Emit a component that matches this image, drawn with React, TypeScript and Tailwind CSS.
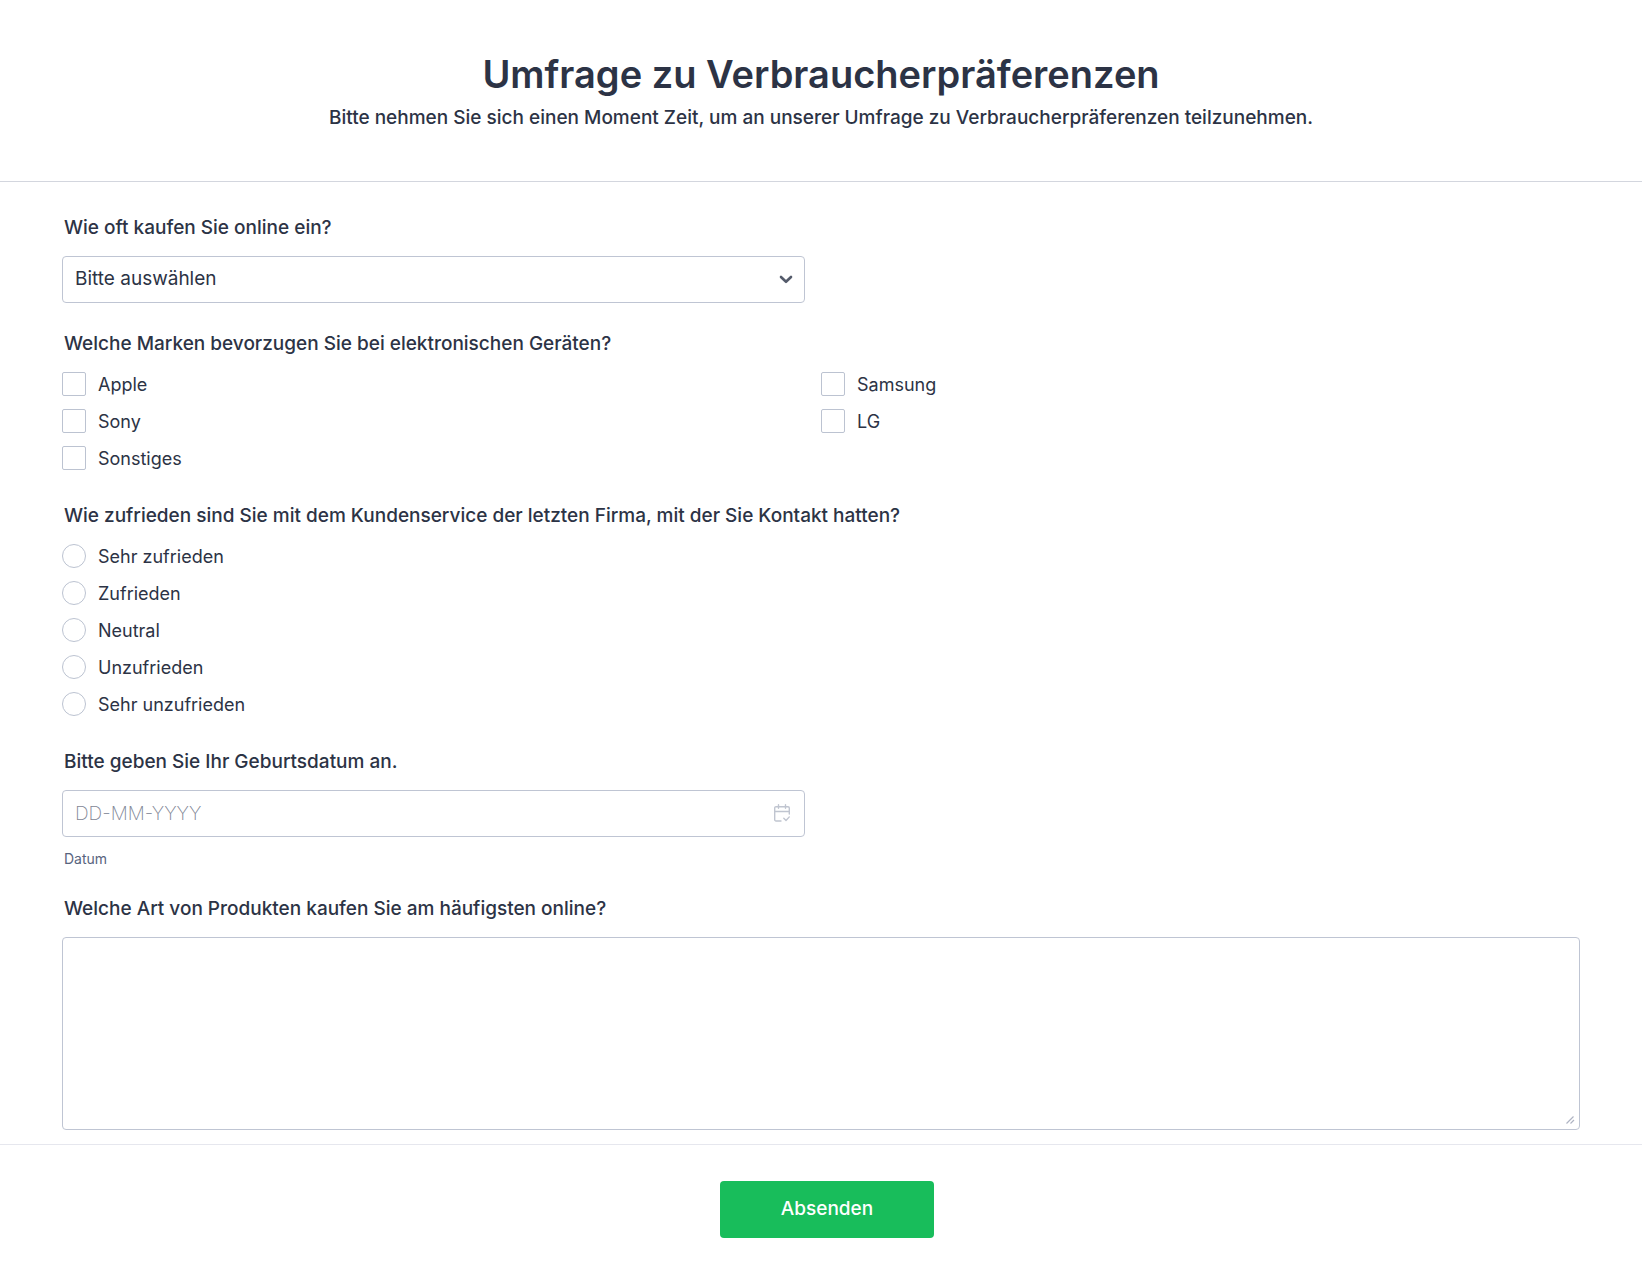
import React from "react";

const brands = ["Apple", "Samsung", "Sony", "LG", "Sonstiges"];
const ratings = ["Sehr zufrieden", "Zufrieden", "Neutral", "Unzufrieden", "Sehr unzufrieden"];
const heading = "px-0.5 text-[19px] leading-6 font-medium";
const field = "h-[47px] w-full rounded border border-[#bfc5d3] bg-white px-3 text-[19px]";

export default function App() {
  return (
    <form className="min-h-screen bg-white font-['Inter',sans-serif] text-[#2c3345]" onSubmit={(e) => e.preventDefault()}>
      <header className="border-b border-[#d3d6de] px-8 py-[49px] text-center">
        <h1 className="text-[38px] leading-[50px] font-semibold">Umfrage zu Verbraucherpräferenzen</h1>
        <p className="mt-[5px] text-[19px] leading-7 font-medium">
          Bitte nehmen Sie sich einen Moment Zeit, um an unserer Umfrage zu Verbraucherpräferenzen teilzunehmen.
        </p>
      </header>
      <div className="px-[62px] pt-[34px] pb-[14px]">
        <section>
          <label htmlFor="often" className={`block ${heading}`}>Wie oft kaufen Sie online ein?</label>
          <div className="relative mt-4 w-[calc(50%-16px)]">
            <select id="often" className={`${field} appearance-none`}>
              <option>Bitte auswählen</option>
            </select>
            <svg className="pointer-events-none absolute top-[16px] right-3 h-[14px] w-[14px]" viewBox="0 0 14 14" fill="none" stroke="#545b6b" strokeWidth="2.6">
              <path d="M2 5l5 4.800L12 5" strokeLinecap="round" strokeLinejoin="round" />
            </svg>
          </div>
        </section>
        <fieldset className="mt-[29px]">
          <legend className={heading}>Welche Marken bevorzugen Sie bei elektronischen Geräten?</legend>
          <div className="mt-4 grid grid-cols-2 gap-y-[13px]">
            {brands.map((b) => (
              <label key={b} className="flex h-6 items-center gap-3 text-[18px]">
                <input type="checkbox" className="h-6 w-6 appearance-none rounded-[2px] border border-[#bcc3d1] checked:bg-[#18bd5b]" />
                {b}
              </label>
            ))}
          </div>
        </fieldset>
        <fieldset className="mt-[34px]">
          <legend className={heading}>Wie zufrieden sind Sie mit dem Kundenservice der letzten Firma, mit der Sie Kontakt hatten?</legend>
          <div className="mt-4 grid gap-y-[13px]">
            {ratings.map((r) => (
              <label key={r} className="flex h-6 items-center gap-3 text-[18px]">
                <input type="radio" name="rating" className="h-6 w-6 appearance-none rounded-full border border-[#bcc3d1] checked:bg-[#18bd5b]" />
                {r}
              </label>
            ))}
          </div>
        </fieldset>
        <section className="mt-[34px]">
          <label htmlFor="birth" className={`block ${heading}`}>Bitte geben Sie Ihr Geburtsdatum an.</label>
          <div className="relative mt-4 w-[calc(50%-16px)]">
            <input id="birth" placeholder="DD-MM-YYYY" aria-describedby="birth-hint" className={`${field} placeholder:font-extralight placeholder:text-[#7f8695]`} />
            <svg className="pointer-events-none absolute top-[14px] right-[15px] h-[18px] w-4" viewBox="0 0 16 18" fill="none" stroke="#c0c5d0" strokeWidth="1.400" strokeLinecap="round" strokeLinejoin="round">
              <path d="M7 17H2a1.300 1.300 0 0 1-1.300-1.300V4A1.300 1.300 0 0 1 2 2.700h12A1.300 1.300 0 0 1 15.300 4v6M1 7.500h14M4.500 0.700v3.600M11.500 0.700v3.600M9.800 14.300l2.200 2.200 3.300-3.600" />
            </svg>
          </div>
          <p id="birth-hint" className="mt-3 px-0.5 text-[14px] leading-5 text-[#57647e]">Datum</p>
        </section>
        <section className="mt-7">
          <label htmlFor="products" className={`block ${heading}`}>Welche Art von Produkten kaufen Sie am häufigsten online?</label>
          <div className="relative mt-4">
            <textarea id="products" className="block h-[193px] w-full resize-none rounded border border-[#bfc5d3] p-3 text-[19px]" />
            <svg className="pointer-events-none absolute right-[5px] bottom-[5px] h-[10px] w-[10px]" viewBox="0 0 10 10" fill="none" stroke="#aeb3c2" strokeWidth="1.2">
              <path d="M1.500 8.500l7-7M5.500 8.500l3.500-3.500" />
            </svg>
          </div>
        </section>
      </div>
      <footer className="flex justify-center border-t border-[#e6e7ee] py-9 pl-3">
        <button type="submit" className="h-[57px] w-[214px] rounded bg-[#18bd5b] text-[19px] font-medium text-white">Absenden</button>
      </footer>
    </form>
  );
}
